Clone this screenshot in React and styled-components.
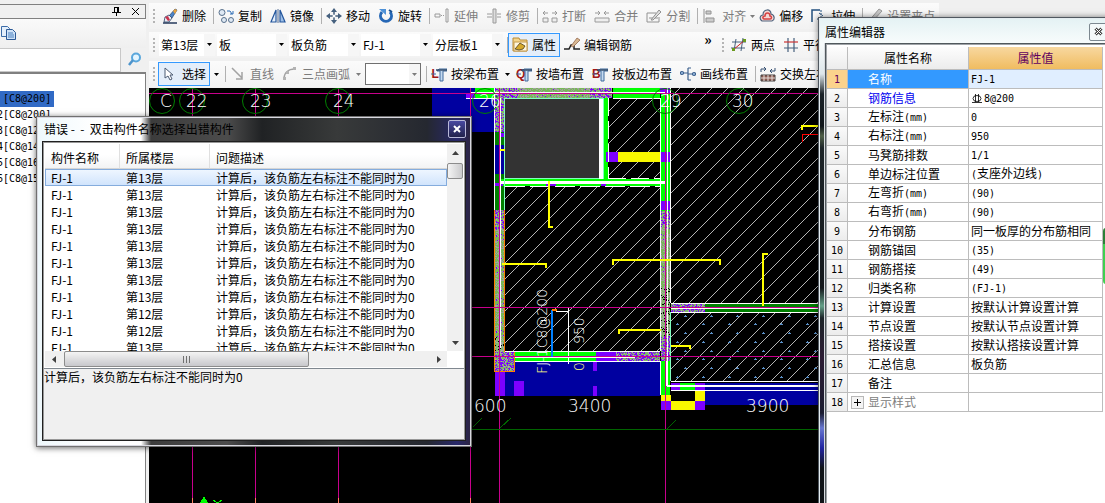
import React from "react";
import styled, { createGlobalStyle, css } from "styled-components";

const UI_FONT = `"Noto Sans CJK SC", "Noto Sans", sans-serif`;
const MONO_FONT = `"DejaVu Sans Mono", "Liberation Mono", monospace`;

const GlobalStyle = createGlobalStyle`
  *, *::before, *::after { box-sizing: border-box; }
  body { margin: 0; overflow: hidden; background: #f0f0f0; font: 12px/16px ${UI_FONT}; color: #000; }
  button, select, input { font: inherit; color: inherit; margin: 0; padding: 0; border: 0; background: none; border-radius: 0; }
`;

/* ---------- shell ---------- */

const Shell = styled.div`
  position: relative;
  display: flex;
  height: 100vh;
  overflow: hidden;
  background: #f0f0f0;
`;

const Workspace = styled.main`
  flex: 1;
  min-width: 0;
  display: flex;
  flex-direction: column;
  padding: 3px 0 0 3px;
`;

/* ---------- component list on the left ---------- */

const SidePanel = styled.aside`
  flex: 0 0 146px;
  min-width: 0;
  display: flex;
  flex-direction: column;
  padding-top: 4px;
`;

const PanelCaption = styled.div`
  display: flex;
  justify-content: flex-end;
  align-items: center;
  gap: 8px;
  height: 15px;
  padding-right: 4px;
  border: 1px solid #808080;
  border-left: 0;
`;

const GlyphButton = styled.button`
  display: grid;
  place-items: center;
  width: 11px;
  height: 11px;
`;

const PanelTools = styled.div`
  height: 29px;
  padding-top: 5px;
  background: linear-gradient(#fafafa, #efefef);
`;

const SearchRow = styled.div`
  display: flex;
  height: 26px;
  border-bottom: 2px solid #808080;
`;

const SearchBox = styled.input`
  flex: 1;
  width: 0;
  min-width: 0;
  margin-right: 3px;
  background: #fff;
  border: 1px solid #c8c8c8;
  border-left: 0;
`;

const SearchButton = styled.button`
  width: 22px;
`;

const ComponentList = styled.ul`
  flex: 1;
  margin: 0;
  padding: 17px 0 0;
  list-style: none;
  background: #fff;
  border-right: 1px solid #808080;
`;

const ComponentItem = styled.li`
  width: 54px;
  height: 16px;
  font: 10px/16px ${MONO_FONT};
  white-space: pre;
  background: ${(p) => (p.$selected ? "#316ac5" : "transparent")};
`;

/* ---------- toolbars ---------- */

const ToolbarRow = styled.div`
  display: flex;
  height: ${(p) => p.$height || 29}px;
  background: #f0f0f0;
`;

const Toolbar = styled.div`
  display: flex;
  flex: ${(p) => (p.$fill ? "1 0 auto" : "0 0 auto")};
  align-items: center;
  height: 26px;
  white-space: nowrap;
  background: linear-gradient(#fbfbfb, #f2f2f2);
`;

const Grip = styled.span`
  width: 2px;
  height: 15px;
  margin: 0 3px 0 4px;
  background: repeating-linear-gradient(#b4b4b4 0 2px, transparent 2px 4px);
`;

const Separator = styled.span`
  width: 1px;
  height: 16px;
  margin-left: 3px;
  background: #b0b0b0;
`;

const ToolButton = styled.button`
  display: flex;
  align-items: center;
  gap: 4px;
  height: 24px;
  padding: 0 4px;
  color: ${(p) => (p.disabled ? "#7c7c7c" : "#000")};
  ${(p) =>
    p.$active &&
    css`
      padding: 0 3px;
      border: 1px solid #3399ff;
      background: #e4eefa;
    `}
`;

const CaretButton = styled.button`
  display: grid;
  place-items: center;
  width: ${(p) => p.$width || 9}px;
  height: 22px;
`;

const Combo = styled.label`
  position: relative;
  display: block;
  width: ${(p) => p.$width || 70}px;
  height: 22px;
  margin: 0 ${(p) => (p.$boxed ? 2 : 1)}px;
  background: linear-gradient(to left, #f6f6f6 11px, #fff 11px);
  border: ${(p) => (p.$boxed ? "1px solid #707070" : "0")};

  select {
    appearance: none;
    width: 100%;
    height: 100%;
    padding-left: 2px;
    outline: 0;
  }
  svg {
    position: absolute;
    right: 3px;
    top: 9px;
    pointer-events: none;
  }
`;

const Overflow = styled.button`
  align-self: flex-start;
  width: 20px;
  margin-left: 62px;
  font-weight: 700;
  font-size: 14px;
  line-height: 14px;
`;

const Icon = ({ children, w = 16, h = 16, label }) => (
  <svg width={w} height={h} viewBox={`0 0 ${w} ${h}`} fill="none" role={label ? "img" : undefined} aria-label={label}>
    {children}
  </svg>
);

const Caret = ({ color = "#000" }) => (
  <Icon w={5} h={3}>
    <path d="M0 0h5L2.500 3z" fill={color} />
  </Icon>
);

const Cross = ({ color = "#000" }) => (
  <Icon w={9} h={9}>
    <path d="M1 1l7 7M8 1l-7 7" stroke={color} />
  </Icon>
);

const ICONS = {
  erase: (
    <>
      <path d="M7 8l6-7 2 1-5 8z" fill="#4a84c8" stroke="#25426e" strokeWidth=".7" />
      <path d="M11 3l2-2 2 1-2 4z" fill="#e9a23b" />
      <path d="M3 9l4-2 3 3-3 4H2z" fill="#e8eef5" stroke="#2b3f63" strokeWidth=".8" />
      <path d="M3 9l3-1 2 4-2 1z" fill="#c8344c" />
      <path d="M1 15h14" stroke="#253a5c" strokeWidth="1.500" />
    </>
  ),
  copy: (
    <g stroke="#58708c" fill="#dfe9f4">
      <circle cx="4" cy="4.500" r="3" />
      <circle cx="6" cy="12" r="2.500" />
      <circle cx="13" cy="12" r="2.500" />
      <path d="M9 3h3l2 3M12 6h3V3" fill="none" stroke="#2d6db5" />
    </g>
  ),
  mirror: (
    <g stroke="#24569c" strokeWidth="1.200">
      <path d="M6 2v12H1z" fill="#e5effb" />
      <path d="M10 2v12h5z" fill="#9dbfe8" />
      <path d="M8 1v14" stroke="#2b4a78" strokeWidth=".8" />
    </g>
  ),
  move: (
    <>
      <path d="M8 2v12M2 8h12" stroke="#45607e" strokeWidth="1.500" />
      <path d="M8 0l3 4H5zM8 16l3-4H5zM0 8l4-3v6zM16 8l-4-3v6z" fill="#45607e" />
      <circle cx="8" cy="8" r="1.500" fill="#fff" />
    </>
  ),
  rotate: (
    <>
      <path d="M4 4a5.500 5.500 0 1 0 8 0" stroke="#2667b5" strokeWidth="3" />
      <path d="M1 1h7v6z" fill="#4d91d8" />
      <path d="M11 2l3 2" stroke="#174f91" strokeWidth="2" />
    </>
  ),
  extend: (
    <g stroke="#9a9a9a">
      <path d="M1 6h5v3H1zM12 1h2v13h-2z" />
      <path d="M7 7.500h4" strokeDasharray="1 1" />
    </g>
  ),
  trim: (
    <g stroke="#9a9a9a">
      <path d="M7 1h3v14H7z" fill="#ddd" />
      <path d="M1 6h5M1 9h5M11 6h4M11 9h4" />
    </g>
  ),
  breakAt: (
    <g stroke="#9a9a9a">
      <path d="M1 10h5v4H1zM10 10h5v4h-5z" fill="#eee" />
      <path d="M1 5h5M3 3L1 5l2 2M15 5h-5M13 3l2 2-2 2" />
    </g>
  ),
  merge: (
    <g stroke="#9a9a9a">
      <path d="M1 10h14v4H1z" fill="#eee" />
      <path d="M1 5h5M4 3l2 2-2 2M15 5h-5M12 3l-2 2 2 2" />
    </g>
  ),
  split: (
    <g stroke="#929292">
      <path d="M1 5h9M1 5v9h12V9M3 10h9" />
      <path d="M5 12l8-10 2 2-8 8z" fill="#ddd" />
    </g>
  ),
  align: (
    <g stroke="#929292">
      <path d="M2 1v14" />
      <path d="M4 3h5v3H4zM4 10h8v4H4z" fill="#ccc" />
    </g>
  ),
  offset: (
    <>
      <path d="M3 13c-3-2-2-6 1-6 0-6 8-7 8-1 4 1 4 6 1 7z" fill="#f3d7d5" stroke="#50647e" strokeWidth="1.200" />
      <path d="M5 11c-2-1-1-3 1-3 0-4 5-4 5 0 2 0 2 3 0 3z" stroke="#d54343" strokeWidth="1.500" />
    </>
  ),
  stretch: (
    <g stroke="#23507f">
      <path d="M1 14V2h8" strokeWidth="1.500" />
      <path d="M10 2v9H6M8 5l4 3" strokeDasharray="2 1" />
    </g>
  ),
  grips: <path d="M1 14L12 1l3 2L5 14z" fill="#c8c8c8" stroke="#999" />,
  property: (
    <>
      <path d="M1 3V1h6l1 2h7v11H1z" fill="#f4d58a" stroke="#b98a35" />
      <path d="M2 5h13v9H2z" fill="#fff6dd" stroke="#c49a4c" />
      <path d="M3 12l5-6 5 3-2 3-4 1z" fill="#d5a92c" stroke="#4c3e1d" strokeWidth=".8" />
    </>
  ),
  editRebar: (
    <>
      <path d="M0 12h5l2-4h3v4h6" stroke="#222" strokeWidth="1.500" />
      <path d="M7 9l6-8 3 2-7 7z" fill="#d8b892" stroke="#8a5a3d" strokeWidth=".7" />
    </>
  ),
  twoPoint: (
    <>
      <path d="M5 2L3 14M12 1l-2 13M1 5h14M0 11h14" stroke="#47607d" />
      <path d="M2 13L14 3" stroke="#c22" />
      <path d="M1 11h3v3H1zM12 2h3v3h-3z" fill="#6a9a1e" />
    </>
  ),
  parallel: (
    <>
      <path d="M5 1v14M11 1v14M1 11h14" stroke="#47607d" strokeWidth="1.200" />
      <path d="M1 5h14" stroke="#c33" strokeWidth="1.200" />
    </>
  ),
  pointer: <path d="M3 2v10l3-2 2 4 2-1-2-4h3z" fill="#fff" stroke="#4d5c74" />,
  line: <path d="M2 2l10 10M12 6v7H6" stroke="#a2a2a2" strokeWidth="1.500" />,
  arc: (
    <>
      <path d="M2 13C2 7 6 3 13 3" stroke="#a2a2a2" strokeWidth="1.500" />
      <path d="M1 11h3v3H1zM4 5h3v3H4zM11 1h3v3h-3z" fill="#b4b4b4" />
    </>
  ),
  wallEdge: (
    <>
      <path d="M0 8h5M6 5l2-2h8v2h-4v10H9V5z" stroke="#3f6a9d" fill="#c5daf0" />
      <path d="M5 4h11" stroke="#304a6a" strokeWidth="1.500" />
    </>
  ),
  drawLine: (
    <g stroke="#3b5f8c" strokeWidth="1.200">
      <circle cx="2" cy="7" r="1.500" fill="#a9c8ec" />
      <path d="M3 7h5M8 2v12M8 2h3M8 14h3M8 8h6" />
      <circle cx="14" cy="8" r="1.500" fill="#a9c8ec" />
    </g>
  ),
  swap: (
    <>
      <path d="M1 6V3h5M4 1l2 2-2 2M15 2v3h-4M12 3l-2 2 2 2" stroke="#344e70" />
      <path d="M1 9h14v6H1z" fill="#8a5a50" stroke="#444" />
      <path d="M4 9v6M8 9v6M12 9v6M1 12h14" stroke="#e8dcd8" />
    </>
  ),
};

const LayoutLetter = styled.span`
  width: 8px;
  margin-right: -12px;
  font: 700 12px/16px "Liberation Sans", sans-serif;
  color: #a01818;
`;

const Tool = ({ icon, text, disabled, active, letter }) => (
  <ToolButton disabled={disabled} $active={active}>
    {letter && <LayoutLetter aria-hidden="true">{letter}</LayoutLetter>}
    <Icon>{ICONS[icon]}</Icon>
    {text}
  </ToolButton>
);

const Choice = ({ label, value, width }) => (
  <Combo $width={width}>
    <select aria-label={label} defaultValue={value}>
      <option>{value}</option>
    </select>
    <Caret />
  </Combo>
);

/* ---------- drawing area ---------- */

const Canvas = styled.div`
  flex: 1;
  min-height: 0;
  background: #000;

  svg {
    display: block;
    width: 100%;
    height: 100%;
  }
`;

const TILE = 32;

function speckle(seed, density) {
  let s = seed;
  let d = "";
  for (let y = 0; y < TILE; y += 1) {
    for (let x = 0; x < TILE; x += 1) {
      s = (s * 1103515245 + 12345) % 2147483648;
      if (s / 2147483648 < density) d += `M${x} ${y}h1v1h-1z`;
    }
  }
  return d;
}

const Speckled = ({ id, base, layers }) => (
  <pattern id={id} width={TILE} height={TILE} patternUnits="userSpaceOnUse">
    <rect width={TILE} height={TILE} fill={base} />
    {layers.map(([color, seed, density]) => (
      <path key={seed} d={speckle(seed, density)} fill={color} />
    ))}
  </pattern>
);

const AXES = [
  { x: 162, tx: 160, text: "C" },
  { x: 192, tx: 186, text: "22" },
  { x: 255, tx: 250, text: "23" },
  { x: 338, tx: 333, text: "24" },
  { x: 485, tx: 479, text: "26" },
  { x: 665, tx: 660, text: "29" },
  { x: 739, tx: 732, text: "30" },
];

const Block = ({ b, fill }) => <rect x={b[0]} y={b[1]} width={b[2] - b[0]} height={b[3] - b[1]} fill={fill} />;
const Blocks = ({ fill, list }) => list.map((b) => <Block key={b.join()} b={b} fill={fill} />);

const Plan = () => (
  <svg viewBox="149 88 956 415" preserveAspectRatio="xMinYMin slice" shapeRendering="crispEdges" role="img" aria-label="板负筋平面图">
    <defs>
      <pattern id="hatch" width="16" height="16" patternUnits="userSpaceOnUse">
        <path d="M-1 17L17 -1" stroke="#b4b4b4" fill="none" />
      </pattern>
      <pattern id="dots" x="676" y="315" width="26" height="35" patternUnits="userSpaceOnUse">
        <path d="M8 1.500h3M9.500 0v2M0 9.500h3M1.500 8v2M8 18.500h3M9.500 17v2M0 27.500h3M1.500 26v2" stroke="#5a90c8" />
      </pattern>
      <Speckled id="mixed" base="#78b858" layers={[["#a0a0a0", 7, 0.4], ["#7d00ff", 91, 0.03]]} />
      <Speckled id="violet" base="#80b868" layers={[["#7d00ff", 53, 0.45], ["#a8a8a8", 17, 0.15]]} />
      <Speckled id="dark" base="#80b868" layers={[["#000", 37, 0.3], ["#a8a8a8", 29, 0.3]]} />
    </defs>

    <Blocks fill="url(#hatch)" list={[[608, 99, 660, 178], [505, 187, 660, 351], [671, 88, 818, 303], [671, 312, 818, 381]]} />
    <Block b={[674, 314, 818, 379]} fill="url(#dots)" />

    <Blocks fill="#0000a0" list={[[432, 88, 495, 132], [494, 145, 505, 174], [495, 361, 660, 396], [705, 383, 818, 405]]} />
    <Blocks fill="#008000" list={[[495, 132, 505, 145], [495, 174, 505, 210], [705, 304, 818, 312]]} />
    <Blocks
      fill="#00ff00"
      list={[
        [475, 88, 495, 98], [613, 88, 660, 98], [604, 98, 608, 180], [500, 179, 660, 186],
        [661, 88, 670, 211], [515, 351, 596, 361], [661, 361, 670, 395], [671, 383, 705, 390],
      ]}
    />
    <Block b={[504, 97, 604, 179]} fill="#80ffc0" />
    <Block b={[505, 99, 599, 178]} fill="#333" />
    <Block b={[599, 99, 603, 179]} fill="#fff" />
    <Blocks fill="url(#mixed)" list={[[495, 230, 505, 340], [512, 88, 595, 98], [661, 225, 670, 290]]} />
    <Blocks fill="url(#dark)" list={[[495, 337, 505, 352], [661, 288, 670, 338]]} />
    <Blocks
      fill="url(#violet)"
      list={[
        [495, 88, 519, 98], [590, 88, 612, 98], [495, 98, 504, 132], [495, 210, 505, 230], [495, 352, 515, 371],
        [616, 352, 660, 361], [661, 211, 670, 225], [661, 336, 670, 361], [671, 304, 705, 312],
      ]}
    />
    <Blocks fill="#f8f800" list={[[618, 152, 660, 162], [661, 395, 671, 401], [695, 391, 705, 401], [671, 401, 695, 410]]} />
    <Blocks
      fill="#7d00ff"
      list={[
        [466, 93, 475, 98], [606, 152, 618, 162], [660, 152, 670, 162], [660, 201, 670, 210], [660, 88, 670, 94],
        [546, 183, 556, 186], [601, 183, 606, 186], [495, 183, 503, 186], [495, 371, 505, 396], [514, 381, 524, 396],
        [593, 362, 597, 371], [593, 386, 597, 396], [596, 352, 616, 361], [671, 383, 680, 390], [695, 383, 705, 390],
        [661, 401, 671, 410], [695, 401, 705, 410], [501, 133, 505, 137],
      ]}
    />

    <g stroke="#fff" fill="none">
      <path d="M466 98.500h29M470 92.500h195M613 98.500h47M494.500 88v122M500.500 98v250" />
      <path d="M500 182h166" strokeWidth="3" />
      <path d="M505 186.500h155" strokeDasharray="20 5" />
      <path d="M660.500 98v253M670.500 88v215M667.500 88v290" />
      <path d="M608.500 98v80M608 178.500h52" strokeDasharray="18 5" />
      <path d="M505 351.500h155M515 361.500h145M515 357.500h120M660.500 361v34" />
      <path d="M671 303.500h147M671 308.500h147M671 312.500h147M671 381.500h147M671 390.500h147" />
      <path d="M667 386h151M667 361v25" strokeWidth="2" />
      <path d="M556 311.500h12M568.500 307v57" />
    </g>
    <path d="M494.500 210v161h20v-19M504.500 210v142" stroke="#ff8000" fill="none" />
    <path d="M504.500 98v112M670.500 312v69" stroke="#80ffc0" />

    <g stroke="#c8008c" fill="none">
      <path d="M149 93.500h669M472 307.500h346M472 356.500h346" />
      <path d="M192.500 88v415M255.500 88v415M338.500 88v415M470.500 88v415M499.500 88v415M665.500 88v415" />
      <path d="M192.500 498v5M255.500 498v5M338.500 498v5M470.500 498v5" stroke="#ff8060" />
    </g>

    <g stroke="#ffff00" strokeWidth="2" fill="none">
      <path d="M549 181v46h4M502 264h44v4M613 265v-5h107v5M619 334v-4h42M671 346h19v3M768 254h-5v52M802 130v-4h16M500 150h5" />
    </g>
    <path d="M802.500 142v-8h16" stroke="#f00" fill="none" />
    <path d="M552 357v-47" stroke="#0080ff" strokeWidth="2" />
    <path d="M552 310h5" stroke="#ff8000" strokeWidth="2" />
    <path d="M472 429.500h346M473 427l9-9M500 428l11-10M667 429l9-9" stroke="#006400" />

    <g shapeRendering="auto" fontFamily="'DejaVu Sans Light', 'DejaVu Sans', sans-serif" fontWeight="200" fill="#fff">
      {AXES.map((a) => (
        <g key={a.text}>
          <circle cx={a.x} cy="101" r="12.500" stroke="#008000" fill="none" />
          <text x={a.tx} y="107" fontSize="17">{a.text}</text>
        </g>
      ))}
      <text x="474" y="412" fontSize="17">600</text>
      <text x="568" y="412" fontSize="17">3400</text>
      <text x="746" y="412" fontSize="17">3900</text>
      <text transform="translate(547 374) rotate(-90)" fontSize="14"><tspan fill="#ffff80">F</tspan>J-1C8@200</text>
      <text transform="translate(584 344) rotate(-90)" fontSize="14">950</text>
      <text transform="translate(584 371) rotate(-90)" fontSize="14" fill="#ffff80">0</text>
    </g>
    <path d="M200 503l4-7 4 7z" fill="#0f0" />
    <path d="M213 500l9 6M222 500l-9 6" stroke="#0f0" />
  </svg>
);

/* ---------- error window ---------- */

const ErrorWindow = styled.section`
  position: absolute;
  left: 36px;
  top: 116px;
  width: 436px;
  display: flex;
  flex-direction: column;
  padding: 0 5px 5px;
  border: 1px solid #707070;
  background: linear-gradient(to right, #eef8fc 0, #fff 60px, #fff 104px, #3c3c3c 114px, #4c4c4c 190px, #202224 225px, #383a3a 300px, #252830 390px, #28286a 420px, #2c2440 100%);
  box-shadow: inset 0 0 0 1px #d8d8e0, 0 1px 6px rgba(0, 0, 0, 0.6);
`;

const TitleBar = styled.header`
  display: flex;
  justify-content: space-between;
  align-items: center;
  height: 24px;
  padding-left: 2px;
  white-space: pre;

  h1, h2 {
    margin: 0;
    font-weight: 400;
    font-size: 12px;
    line-height: 16px;
  }
`;

const CloseButton = styled.button`
  display: grid;
  place-items: center;
  width: 18px;
  height: 18px;
  border: 1px solid ${(p) => (p.$dark ? "#b8b8d8" : "#7c8890")};
  background: ${(p) => (p.$dark ? "linear-gradient(#4848a0, #22224c)" : "#f4f9fa")};
  border-radius: 2px;
`;

const ErrorBody = styled.div`
  border: 1px solid #202020;
  box-shadow: inset 0 0 0 1px #989898;
  background: #f0f0f0;
  padding: 1px;
`;

const ListFrame = styled.div`
  display: grid;
  grid-template-columns: minmax(0, 1fr) 16px;
  grid-template-rows: 207px 16px;
  padding: 1px;
  background: #fff;
  border-bottom: 1px solid #808890;
`;

const ListViewport = styled.div`
  overflow: hidden;
`;

const ErrorTable = styled.table`
  width: 100%;
  table-layout: fixed;
  border-collapse: separate;
  border-spacing: 0;
  line-height: 16px;

  th {
    height: 25px;
    padding: 3px 6px 0;
    text-align: left;
    font-weight: 400;
    background: linear-gradient(#fff 45%, #f2f3f4);
    border-bottom: 1px solid #d5d5d5;
    border-right: 1px solid #e0e0e0;
  }
  th:last-child { border-right: 0; }
  td { height: 17px; padding: 1px 6px 0; white-space: nowrap; }
`;

const ErrorRow = styled.tr`
  ${(p) =>
    p.$selected &&
    css`
      outline: 1px solid #84acdd;
      outline-offset: -1px;
      background: linear-gradient(#f0f7ff, #cfe3fc);
    `}
`;

const ScrollTrack = styled.div`
  display: flex;
  flex-direction: ${(p) => (p.$horizontal ? "row" : "column")};
  background: #f0f0f0;
`;

const ScrollArrow = styled.button`
  display: grid;
  place-items: center;
  flex: 0 0 ${(p) => (p.$large ? 19 : 17)}px;
`;

const ScrollThumb = styled.div`
  flex: 0 0 ${(p) => p.$size};
  display: grid;
  place-items: center;
  border: 1px solid #8c8c8c;
  border-radius: 2px;
  background: ${(p) => (p.$horizontal ? "linear-gradient(#f4f4f4, #c8c8cc)" : "linear-gradient(to right, #f4f4f4, #cacacc)")};
`;

const Spacer = styled.span`
  flex: 1;
`;

const ErrorDetail = styled.p`
  height: 70px;
  margin: 0;
`;

const FLOORS = ["第13层", "第13层", "第13层", "第13层", "第13层", "第13层", "第13层", "第13层", "第12层", "第12层", "第13层"];
const MESSAGE = "计算后，该负筋左右标注不能同时为0";

const Arrow = ({ d }) => (
  <Icon w={7} h={7}>
    <path d={d} fill="#404040" />
  </Icon>
);

const Errors = () => (
  <ErrorWindow>
    <TitleBar>
      <h1>{"错误 -  -  双击构件名称选择出错构件"}</h1>
      <CloseButton $dark aria-label="关闭">
        <Icon w={8} h={8}><path d="M1 1l6 6M7 1L1 7" stroke="#fff" strokeWidth="2" /></Icon>
      </CloseButton>
    </TitleBar>
    <ErrorBody>
      <ListFrame>
        <ListViewport>
          <ErrorTable>
            <colgroup>
              <col width="75" />
              <col width="90" />
              <col />
            </colgroup>
            <thead>
              <tr>
                <th>构件名称</th>
                <th>所属楼层</th>
                <th>问题描述</th>
              </tr>
            </thead>
            <tbody>
              {FLOORS.map((floor, i) => (
                <ErrorRow key={i} $selected={i === 0}>
                  <td>FJ-1</td>
                  <td>{floor}</td>
                  <td>{MESSAGE}</td>
                </ErrorRow>
              ))}
            </tbody>
          </ErrorTable>
        </ListViewport>
        <ScrollTrack>
          <ScrollArrow $large aria-label="向上"><Arrow d="M0 5l3.500-4L7 5z" /></ScrollArrow>
          <ScrollThumb $size="16px" />
          <Spacer />
          <ScrollArrow aria-label="向下"><Arrow d="M0 2l3.500 4L7 2z" /></ScrollArrow>
        </ScrollTrack>
        <ScrollTrack $horizontal>
          <ScrollArrow $large aria-label="向左"><Arrow d="M5 0v7L1 3.500z" /></ScrollArrow>
          <ScrollThumb $horizontal $size="61%">
            <Icon w={9} h={7}><path d="M1.500 0v7M4.500 0v7M7.500 0v7" stroke="#707070" /></Icon>
          </ScrollThumb>
          <Spacer />
          <ScrollArrow aria-label="向右"><Arrow d="M2 0v7l4-3.500z" /></ScrollArrow>
        </ScrollTrack>
      </ListFrame>
      <ErrorDetail>{MESSAGE}</ErrorDetail>
    </ErrorBody>
  </ErrorWindow>
);

/* ---------- property window ---------- */

const PropertyWindow = styled.section`
  position: absolute;
  left: 818px;
  top: 17px;
  bottom: -8px;
  width: 300px;
  display: flex;
  flex-direction: column;
  padding: 0 6px;
  border: 1px solid #505860;
  background: linear-gradient(#e4f2f4 0, #f8fcfc 26px, #dde6ea 56px, #1a2228 76px, #10161a 108px, #506048 118px, #1c2428 130px, #14181c 270px, #64a088 288px, #1c2428 300px, #2c1c34 340px, #1a1c30 395px, #6878d0 410px, #2024a0 430px, #101418 450px);
  box-shadow: inset 0 0 0 1px #e4ecf0, 0 0 6px rgba(0, 0, 0, 0.5);
`;

const PropertyBody = styled.div`
  flex: 1;
  padding: 1px 0 0 1px;
  border: 1px solid #50585c;
  box-shadow: -1px 0 0 #d8dce0, inset 1px 1px 0 #a0a4a8;
  background: #fff;
`;

const PropertyTitle = styled(TitleBar)`
  height: 25px;
  padding: 2px 2px 0 0;
`;

const CloseSlot = styled.span`
  display: flex;
  padding-right: 2px;
`;

const PropertyTable = styled.table`
  width: 276px;
  margin-top: 2px;
  table-layout: fixed;
  border-collapse: separate;
  border-spacing: 0;

  th, td {
    height: 19px;
    padding: 0;
    border-right: 1px solid #bcbcbc;
    border-bottom: 1px solid #bcbcbc;
    font-weight: 400;
    line-height: 16px;
    white-space: nowrap;
  }
  thead th { height: 23px; background: linear-gradient(#fdfdfd, #ececec); }
  thead th:last-child { background: linear-gradient(#f8d8a0, #f0bc60); color: #600060; }
`;

const RowNumber = styled.th`
  background: ${(p) => (p.$selected ? "#fbd28c" : "linear-gradient(#fafafa, #ececec)")};
  color: ${(p) => (p.$selected ? "#600060" : "#000")};
`;

const NAME_COLORS = { link: "#0000f0", muted: "#808080", selected: "#fff" };

const NameCell = styled.td`
  color: ${(p) => NAME_COLORS[p.$kind] || "#000"};
  background: ${(p) => (p.$kind === "selected" ? "#3399ff" : "#fff")};

  span.name { display: flex; align-items: center; gap: 4px; padding-left: ${(p) => (p.$expandable ? 3 : 20)}px; }
`;

const ValueCell = styled.td`
  background: ${(p) => (p.$selected ? "#e0eeff" : "#fff")};

  span.value { display: flex; align-items: center; gap: 2px; padding-left: 2px; }
`;

const ExpandButton = styled.button`
  display: grid;
  place-items: center;
  width: 13px;
  height: 13px;
  border: 1px solid #b8b8b8;
  background: #f4f4f4;
`;

const LatinRun = styled.span`
  font: 10px/16px ${MONO_FONT};
`;

const Mixed = ({ children }) => (
  <span>
    {children.split(/([\x20-\x7e]+)/).map((part, i) => (i % 2 ? <LatinRun key={i}>{part}</LatinRun> : part))}
  </span>
);

const ScrollHint = styled.span`
  position: absolute;
  left: 1103px;
  top: 228px;
  width: 6px;
  height: 56px;
  border-radius: 3px;
  background: linear-gradient(#2c8038 16px, #40d050 16px);
`;

const PROPERTIES = [
  ["名称", "FJ-1", "selected"],
  ["钢筋信息", "8@200", "link"],
  ["左标注(mm)", "0"],
  ["右标注(mm)", "950"],
  ["马凳筋排数", "1/1"],
  ["单边标注位置", "(支座外边线)"],
  ["左弯折(mm)", "(90)"],
  ["右弯折(mm)", "(90)"],
  ["分布钢筋", "同一板厚的分布筋相同"],
  ["钢筋锚固", "(35)"],
  ["钢筋搭接", "(49)"],
  ["归类名称", "(FJ-1)"],
  ["计算设置", "按默认计算设置计算"],
  ["节点设置", "按默认节点设置计算"],
  ["搭接设置", "按默认搭接设置计算"],
  ["汇总信息", "板负筋"],
  ["备注", ""],
  ["显示样式", "", "muted"],
];

const RebarGrade = () => (
  <Icon w={11} h={11} label="三级钢">
    <ellipse cx="6" cy="5.500" rx="4" ry="3" stroke="#000" strokeWidth=".8" />
    <path d="M4.500 1v8M7.500 1v8M1 9.500h10" stroke="#000" strokeWidth=".8" />
  </Icon>
);

const Properties = () => (
  <PropertyWindow>
    <PropertyTitle>
      <h2>属性编辑器</h2>
      <CloseSlot>
        <CloseButton aria-label="关闭">
          <Icon w={9} h={9}>
            <path d="M1.500 1.500l6 6M7.500 1.500l-6 6" stroke="#444" strokeWidth="3" />
            <path d="M1.500 1.500l6 6M7.500 1.500l-6 6" stroke="#fff" />
          </Icon>
        </CloseButton>
      </CloseSlot>
    </PropertyTitle>
    <PropertyBody>
      <PropertyTable>
        <colgroup>
          <col width="21" />
          <col width="121" />
          <col />
        </colgroup>
        <thead>
          <tr>
            <th aria-label="序号" />
            <th>属性名称</th>
            <th>属性值</th>
          </tr>
        </thead>
        <tbody>
          {PROPERTIES.map(([name, value, kind], i) => (
            <tr key={name}>
              <RowNumber scope="row" $selected={i === 0}>
                <Mixed>{String(i + 1)}</Mixed>
              </RowNumber>
              <NameCell $kind={kind} $expandable={kind === "muted"}>
                <span className="name">
                  {kind === "muted" && (
                    <ExpandButton aria-label="展开">
                      <Icon w={7} h={7}><path d="M0 3.500h7M3.500 0v7" stroke="#000" /></Icon>
                    </ExpandButton>
                  )}
                  <Mixed>{name}</Mixed>
                </span>
              </NameCell>
              <ValueCell $selected={i === 0}>
                <span className="value">
                  {kind === "link" && <RebarGrade />}
                  <Mixed>{value}</Mixed>
                </span>
              </ValueCell>
            </tr>
          ))}
        </tbody>
      </PropertyTable>
    </PropertyBody>
  </PropertyWindow>
);

/* ---------- page ---------- */

const COMPONENTS = [" [C8@200]", "2[C8@200]", "3[C8@120]", "4[C8@140]", "5[C8@160]", "6[C8@150]"];

const ItemText = styled.span`
  display: block;
  margin-left: -3px;
`;

export default function App() {
  return (
    <Shell>
      <GlobalStyle />
      <SidePanel>
        <PanelCaption>
          <GlyphButton aria-label="固定">
            <Icon w={9} h={9}><path d="M2.500 0v5M2 .5h4M5.500 0v5M6.500 0v5M0 5.500h9M4.500 6v3" stroke="#000" /></Icon>
          </GlyphButton>
          <GlyphButton aria-label="关闭"><Cross /></GlyphButton>
        </PanelCaption>
        <PanelTools>
          <button aria-label="复制构件">
            <Icon w={18} h={18}>
              <path d="M1.500 2.500h6l2 2v8h-8z" fill="#e4effb" stroke="#3c6ca8" />
              <path d="M6.500 5.500h6l3 3v7h-9z" fill="#cfe2f7" stroke="#2d5a96" />
              <path d="M8 9h5M8 11h6M8 13h6" stroke="#4d82c0" />
            </Icon>
          </button>
        </PanelTools>
        <SearchRow>
          <SearchBox aria-label="搜索构件" />
          <SearchButton aria-label="搜索">
            <Icon w={14} h={14}>
              <circle cx="8" cy="5.500" r="4" fill="#e4f5ff" stroke="#5aa7dc" strokeWidth="2" />
              <path d="M5 8l-4 5" stroke="#4d94cc" strokeWidth="2.500" />
            </Icon>
          </SearchButton>
        </SearchRow>
        <ComponentList>
          {COMPONENTS.map((text, i) => (
            <ComponentItem key={text} $selected={i === 0}><ItemText>{text}</ItemText></ComponentItem>
          ))}
        </ComponentList>
      </SidePanel>

      <Workspace>
        <ToolbarRow>
          <Toolbar>
            <Grip />
            <Tool icon="erase" text="删除" />
            <Separator />
            <Tool icon="copy" text="复制" />
            <Tool icon="mirror" text="镜像" />
            <Separator />
            <Tool icon="move" text="移动" />
            <Tool icon="rotate" text="旋转" />
            <Separator />
            <Tool icon="extend" text="延伸" disabled />
            <Tool icon="trim" text="修剪" disabled />
            <Separator />
            <Tool icon="breakAt" text="打断" disabled />
            <Tool icon="merge" text="合并" disabled />
            <Tool icon="split" text="分割" disabled />
            <Separator />
            <Tool icon="align" text="对齐" disabled />
            <CaretButton $width={5} aria-label="对齐选项"><Caret color="#7c7c7c" /></CaretButton>
            <Tool icon="offset" text="偏移" />
            <Tool icon="stretch" text="拉伸" />
            <Separator />
            <Tool icon="grips" text="设置夹点" disabled />
          </Toolbar>
        </ToolbarRow>

        <ToolbarRow>
          <Toolbar>
            <Grip />
            <Choice label="楼层" value="第13层" width={56} />
            <Choice label="构件类型" value="板" />
            <Choice label="构件" value="板负筋" />
            <Choice label="构件名称" value="FJ-1" />
            <Choice label="分层" value="分层板1" />
            <Separator />
            <Tool icon="property" text="属性" active />
            <Tool icon="editRebar" text="编辑钢筋" />
            <Overflow aria-label="更多">»</Overflow>
          </Toolbar>
          <Toolbar $fill>
            <Grip />
            <Tool icon="twoPoint" text="两点" />
            <Tool icon="parallel" text="平行" />
          </Toolbar>
        </ToolbarRow>

        <ToolbarRow $height={27}>
          <Toolbar>
            <Grip />
            <Tool icon="pointer" text="选择" active />
            <CaretButton $width={12} aria-label="选择方式"><Caret /></CaretButton>
            <Separator />
            <Tool icon="line" text="直线" disabled />
            <Tool icon="arc" text="三点画弧" disabled />
            <CaretButton aria-label="画弧方式"><Caret color="#7c7c7c" /></CaretButton>
            <Combo $boxed $width={56}>
              <select aria-label="参数"><option> </option></select>
              <Caret color="#7c7c7c" />
            </Combo>
            <Separator />
            <Tool icon="wallEdge" letter="L" text="按梁布置" />
            <CaretButton aria-label="按梁布置选项"><Caret /></CaretButton>
            <Tool icon="wallEdge" letter="Q" text="按墙布置" />
            <Tool icon="wallEdge" letter="B" text="按板边布置" />
            <Tool icon="drawLine" text="画线布置" />
            <Separator />
            <Tool icon="swap" text="交换左右标注" />
          </Toolbar>
        </ToolbarRow>

        <Canvas>
          <Plan />
        </Canvas>
      </Workspace>

      <Errors />
      <Properties />
      <ScrollHint />
    </Shell>
  );
}
